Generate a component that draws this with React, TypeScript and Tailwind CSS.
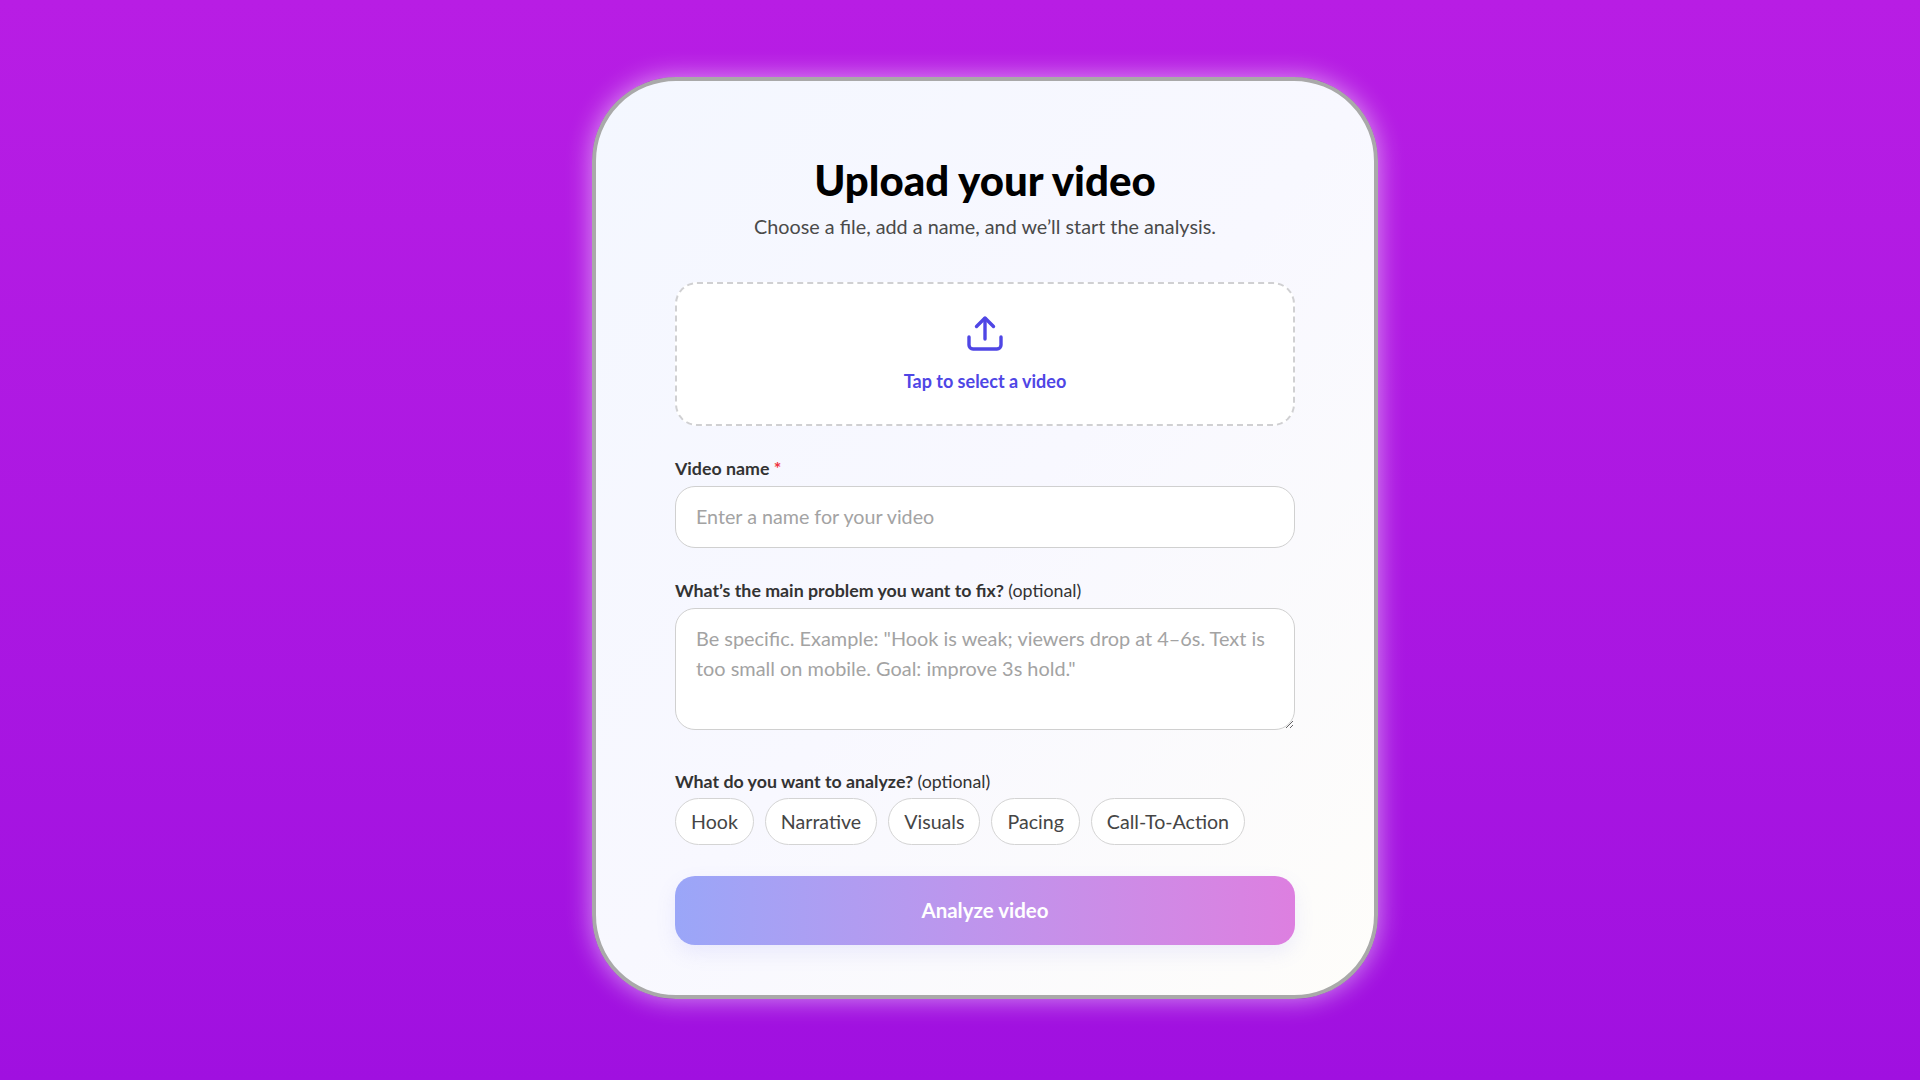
import { useState } from "react";

const FONT = "font-['Lato','Liberation_Sans',sans-serif]";
const TOPICS = ["Hook", "Narrative", "Visuals", "Pacing", "Call-To-Action"];

function UploadIcon() {
  return (
    <svg width="40" height="40" viewBox="0 0 40 40" fill="none" stroke="#4f46e5" strokeWidth="3.4" strokeLinecap="round" strokeLinejoin="round">
      <path d="M20 25V4.5" />
      <path d="M11.5 12.5 20 4l8.5 8.5" />
      <path d="M4 23v8a4 4 0 0 0 4 4h24a4 4 0 0 0 4-4v-8" />
    </svg>
  );
}

export default function App() {
  const [selected, setSelected] = useState<string[]>([]);

  const toggle = (t: string) =>
    setSelected((cur) => (cur.includes(t) ? cur.filter((x) => x !== t) : [...cur, t]));

  return (
    <div className={`${FONT} flex min-h-screen justify-center bg-gradient-to-b from-[#b81de4] to-[#a010e0] pt-[77px] pb-[81px] pl-[50px]`}>
      <div className="h-[922px] w-[786px] rounded-[84px] border-4 border-[#a9a9a9] bg-gradient-to-br from-[#f4f7ff] via-[#f8f8ff] to-[#fefdfa] px-[79px] pt-[74px] shadow-[0_0_26px_rgba(255,255,255,0.55)]">
        <h1 className="text-center text-[42px] leading-[50px] font-black text-black">Upload your video</h1>
        <p className="mt-[7px] text-center text-[19.8px] leading-[28px] text-[#4a4a4a]">
          Choose a file, add a name, and we’ll start the analysis.
        </p>

        <button className="mt-[42px] flex h-[144px] w-full flex-col items-center rounded-[22px] border-2 border-dashed border-[#d0d0d2] bg-white pt-[30px]">
          <UploadIcon />
          <span className="mt-[15px] text-[18px] leading-[24px] font-bold text-[#4f46e5]">Tap to select a video</span>
        </button>

        <label className="mt-[30px] block text-[17.8px] leading-[24px] font-bold text-[#333333]">
          Video name <span className="text-[#ef3340]">*</span>
        </label>
        <input
          placeholder="Enter a name for your video"
          className="mt-[6px] block h-[62px] w-full rounded-[20px] border-[1.5px] border-[#d0d0d0] bg-white px-[20px] pb-[1px] text-[19.7px] text-[#333333] outline-none placeholder:text-[#a3a3a3]"
        />

        <label className="mt-[30px] block text-[17.8px] leading-[24px] font-bold text-[#333333]">
          What’s the main problem you want to fix? <span className="font-normal">(optional)</span>
        </label>
        <textarea
          placeholder={'Be specific. Example: "Hook is weak; viewers drop at 4–6s. Text is too small on mobile. Goal: improve 3s hold."'}
          className="mt-[6px] block h-[122px] w-full rounded-[20px] border-[1.5px] border-[#d0d0d0] bg-white px-[20px] py-[14px] text-[19.9px] leading-[30px] text-[#333333] outline-none placeholder:text-[#a3a3a3]"
        />

        <label className="mt-[39px] block text-[17.8px] leading-[24px] font-bold text-[#333333]">
          What do you want to analyze? <span className="font-normal">(optional)</span>
        </label>
        <div className="mt-[5px] flex gap-[11px]">
          {TOPICS.map((t) => (
            <button
              key={t}
              onClick={() => toggle(t)}
              className={`h-[47px] rounded-full border-[1.5px] border-[#d4d4d4] bg-white px-[15px] text-[19.6px] text-[#454545] ${selected.includes(t) ? "border-[#4f46e5]" : ""}`}
            >
              {t}
            </button>
          ))}
        </div>

        <button className="mt-[31px] h-[69px] w-full rounded-[20px] bg-gradient-to-r from-[#9aa6f8] to-[#dd7fe0] text-[20.5px] font-bold text-white shadow-[0_8px_20px_rgba(120,120,240,0.12)]">
          Analyze video
        </button>
      </div>
    </div>
  );
}
